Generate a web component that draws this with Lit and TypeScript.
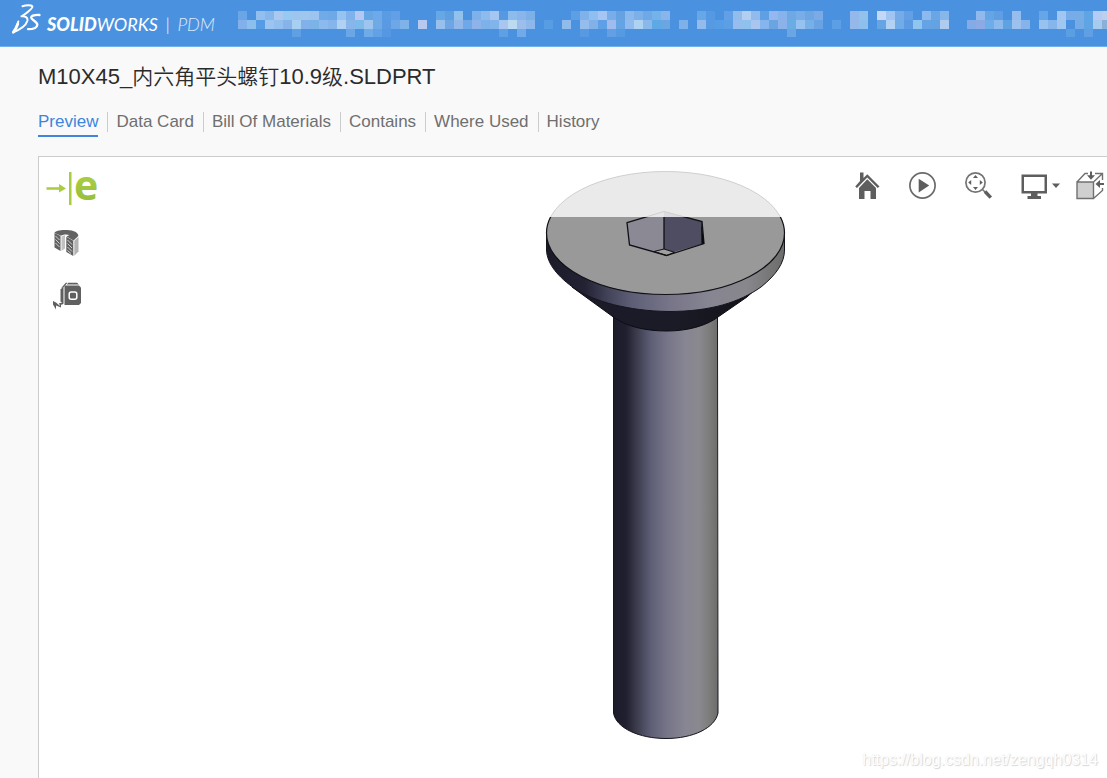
import { LitElement, html, svg, css } from "lit";
import { customElement, state } from "lit/decorators.js";

const CELL = 9;

/* Colour runs for the masked caption: "startColumn:colour,colour,..." */
const MASK_ROWS: string[][] = [
  [
    "0:6aa6e6",
    "2:92bfee,86b7ec,abc8ef,97caf0,9ec5ee,9fc6ed,9dc4ee,70aae8,6ea8e6,97c3f0,7fb1ea,b4c8f2,66a6e4,6eaae9,5a9be4,639fe6",
    "22:66a7e5,5e9fe2,92c2eb",
    "26:7eb0ea,8dbbee,a6c6f0,5599e2,8cbcec,8ab5ea,7eb0e8",
    "37:5c9fe4,80b2ea,8fbff0,a6c5f2,78ade9,66a2e2,8bb9ec,7eb0e8,6ea8e6,76b2ea,8ab5ec",
    "51:66a7e6,5599e2",
    "54:639fe6,92bcec,b2cff2,92bbec,5f9fe4,94b7ee,88b2ea,6fa9e4,78ade8,6ea6e4,7caae6",
    "68:94b8ea,92c2ec",
    "71:c4d7f6,a0c5f2,76abe8,629fe4",
    "76:8db9ee,68a6e6,86b7e8",
    "82:92b9ec,66a5e4,5f9ee2",
    "86:97bdec",
    "89:66a5e6",
    "91:a2c6f2,78ace8,76ade6,5fa5e4,b4cbf6,bccfee",
  ],
  [
    "0:82b0ea,8bbfec,559ce4,9bc4f0,93bfee,86b4ea,a6cff2,82b0ea,7cb3e7,8dbaee,86b5ec,b0d1f4,89b6ea,7ebaec,9ec5ee,6faae7,5a9ae2,6ea7e8,80b2ea",
    "20:b8c9f0",
    "22:97c1ec,6ea5e4,92b8ea,6ea8e6,8db3ea,7db1ea,80b4ea,a8c6f0,bcdaf2,9cbeec,8cb8ec",
    "34:579de4",
    "36:8fbcec",
    "38:94bcec,82b1e8,5f9fe6,a0bbee,64a4e4,90baf0,add2f2,89b8ea,5fa8e6,6aa6e2",
    "49:7eb0ea",
    "51:94bbee,579ae2,559de4,5c9fe4,97bdee,8fc1ec,a8c6f0,86b4ec,6aa5e2,8cb2ea,6aace4,97c1ee,76b0e8,6aa3e4",
    "66:5c9fe4",
    "68:94b8ea,8dc0ec",
    "71:66a5e4,b2d2f4,70ace8,5c9be2,92c4f0,64a4e6,64a2e2,b0cbf0",
    "81:82abe8,8cabe4,6cadea,8cbaec,5fa2e4,9cc1ee,86b4ea",
    "89:97c2f0,86b5ec,a0c6f2",
    "93:76abe6,5fa5e4,a6cbee,8ab0d8",
  ],
  [
    "6:5f9fe4",
    "12:6ba7e6",
    "14:6fabe8,62a1e5,5597e0",
    "29:5f9fe4",
    "31:70aae8",
    "38:559ae2",
    "41:629fe4,569ae2",
    "61:6aa6e4",
    "92:5c9ee2",
    "94:609fe4",
  ],
];

@customElement("pdm-header")
export class PdmHeader extends LitElement {
  static styles = css`
    :host {
      display: flex;
      align-items: flex-start;
      box-sizing: border-box;
      height: 47px;
      overflow: hidden;
      background: #4a92e0;
      border-bottom: 1px solid #6fb0ee;
      color: #fff;
    }
    .brand {
      flex: none;
      display: flex;
      align-items: flex-start;
      width: 226px;
      padding-left: 12px;
      color: inherit;
      text-decoration: none;
    }
    .mark {
      flex: none;
      display: block;
      margin-top: 4px;
    }
    .word {
      margin: 13px 0 0 6px;
      font: italic 400 18px/22px Lato, "Open Sans", sans-serif;
      white-space: nowrap;
    }
    .strong {
      font-weight: 900;
    }
    .bar {
      margin: 0 3px;
      font-weight: 300;
    }
    .thin {
      font-weight: 300;
      opacity: 0.8;
    }
    .mask {
      flex: none;
      display: block;
      margin-top: 11px;
    }
  `;

  render() {
    return html`
      <a class="brand" href="#" aria-label="SOLIDWORKS PDM">
        <svg class="mark" width="29" height="30" viewBox="12 4 29 30" fill="none" stroke="#fff" stroke-linecap="round" stroke-linejoin="round">
          <path d="M22.500 6.200 C26 5 31 4.800 32.300 6.200 C33.500 8 28 12 22.500 15.800" stroke-width="2" />
          <path d="M21.500 16.300 C25 16 28.300 17.200 27.300 21 C26 25.500 19 30 12.800 32.500 C15 29.500 17 26.500 18.300 21.500" stroke-width="2" />
          <path d="M13.500 32 C15.500 29.500 16.800 27 17.800 24" stroke-width="2.600" />
          <path d="M39.500 15 C35.500 14.500 31 15.500 31.200 17.700 C31.500 20 37.500 21.500 37.300 24.800 C37 27.800 33 29.200 28 29.200" stroke-width="2.300" />
        </svg>
        <span class="word"><span class="strong">SOLID</span>WORKS<span class="bar"> | </span><span class="thin">PDM</span></span>
      </a>
      <svg class="mask" width="873" height="26" viewBox="0 0 873 26" shape-rendering="crispEdges" aria-hidden="true">
        ${MASK_ROWS.map((row, y) =>
          row.map((run) => {
            const [start, list] = run.split(":");
            return list.split(",").map(
              (c, i) => svg`<rect x=${(Number(start) + i) * CELL} y=${y * CELL} width=${CELL} height=${y === 2 ? 8 : CELL} fill=${"#" + c}></rect>`
            );
          })
        )}
      </svg>
    `;
  }
}

@customElement("screw-model")
export class ScrewModel extends LitElement {
  static styles = css`
    :host {
      display: block;
    }
    .model {
      display: block;
    }
  `;

  render() {
    return html`
      <svg class="model" width="242" height="570" viewBox="545 171 242 570" role="img" aria-label="M10X45">
        <defs>
          <linearGradient id="shaft">
            <stop offset="0" stop-color="#1c1b2a" />
            <stop offset="0.120" stop-color="#201f2f" />
            <stop offset="0.200" stop-color="#363646" />
            <stop offset="0.360" stop-color="#5e5f77" />
            <stop offset="0.520" stop-color="#777588" />
            <stop offset="0.680" stop-color="#868592" />
            <stop offset="0.820" stop-color="#8a898f" />
            <stop offset="0.920" stop-color="#7c7c7b" />
            <stop offset="1" stop-color="#6c6c6a" />
          </linearGradient>
          <linearGradient id="rim">
            <stop offset="0" stop-color="#1b1a29" />
            <stop offset="0.160" stop-color="#232233" />
            <stop offset="0.260" stop-color="#43435a" />
            <stop offset="0.360" stop-color="#5e5f77" />
            <stop offset="0.520" stop-color="#777588" />
            <stop offset="0.680" stop-color="#868592" />
            <stop offset="0.840" stop-color="#88878c" />
            <stop offset="1" stop-color="#6c6c6a" />
          </linearGradient>
          <linearGradient id="cone">
            <stop offset="0" stop-color="#1b1a29" />
            <stop offset="0.550" stop-color="#1b1b27" />
            <stop offset="1" stop-color="#111116" />
          </linearGradient>
          <clipPath id="upper"><rect x="545" y="165" width="242" height="52" /></clipPath>
          <clipPath id="lower"><rect x="545" y="217" width="242" height="100" /></clipPath>
        </defs>
        <path d="M613.500 312 V713 C616 728 639 738.500 666 738.500 C693 738.500 715 728 718 713 L717 312 Z" fill="url(#shaft)" />
        <path d="M613.500 316 V713 C616 728 639 738.500 666 738.500 C693 738.500 715 728 718 713 L717.500 316" fill="none" stroke="#15151d" stroke-width="1" />
        <path d="M572 287 L614 317.500 C628 327 646 331 667 331 C687 331 706 326 718 317 L747 297 L760 285 Z" fill="url(#cone)" stroke="#0c0c12" stroke-width="1" />
        <path d="M546.500 234 V250 C547 264 558 277 576 289.500 C594 301 627 311 669 311.500 C711 311.500 740 302 761 287 C776 275 784.500 263 784.500 250 V234 Z" fill="url(#rim)" stroke="#15151d" stroke-width="1" />
        <g clip-path="url(#lower)">
          <ellipse cx="665.500" cy="233" rx="119" ry="61.500" fill="#999" stroke="#101015" stroke-width="1.200" />
        </g>
        <g clip-path="url(#upper)">
          <ellipse cx="665.500" cy="233" rx="119" ry="61.500" fill="#eaeaea" stroke="#cfcfcf" stroke-width="1" />
        </g>
        <g clip-path="url(#lower)">
          <path d="M627 222.700 L664 211.500 V249 L654 251.500 L629.500 245 Z" fill="#8a8994" />
          <path d="M664 211.500 L702 221.500 L704 243.500 L674 252 L664 249 Z" fill="#4e4d61" />
          <path d="M654 251.500 L664 249 L674.500 252.300 L666.500 255.500 Z" fill="#a0a09c" stroke="#101015" stroke-width="1" />
          <path d="M627 222.700 L664 211.500 L702 221.500 L704 243.500 L666.500 255.500 L629.500 245 Z M664 211.500 V249" fill="none" stroke="#101015" stroke-width="1.300" />
          <path d="M701 221.300 L704 243.500 L701.500 244 Z" fill="#08080c" />
        </g>
        <g clip-path="url(#upper)">
          <path d="M627 222.700 L664 211.500 V222 Z" fill="#e8e8ea" />
          <path d="M664 211.500 L702 221.500 H664 Z" fill="#dcdce0" />
          <path d="M627 222.700 L664 211.500 L702 221.500" fill="none" stroke="#cfcfcf" stroke-width="1" />
        </g>
      </svg>
    `;
  }
}

@customElement("app-root")
export class AppRoot extends LitElement {
  static styles = css`
    :host {
      display: flex;
      flex-direction: column;
      position: relative;
      min-height: 100vh;
      overflow: hidden;
      background: #f9f9f9;
      color: #2b2b2b;
      font-family: "Liberation Sans", "Noto Sans CJK SC", Arial, sans-serif;
    }
    .page {
      flex: 1;
      display: flex;
      flex-direction: column;
      padding: 16px 0 0 38px;
    }
    .title {
      margin: 0;
      font-size: 22px;
      font-weight: 400;
      line-height: 28px;
      white-space: nowrap;
    }
    .han {
      font-size: 21px;
      font-weight: 350;
    }
    .tabs {
      display: flex;
      margin: 18px 0;
    }
    .item {
      display: flex;
      align-items: flex-start;
      height: 29px;
    }
    .item + .item::before {
      content: "";
      width: 1px;
      height: 20px;
      margin: 3px 8px 0 9px;
      background: #ccc;
    }
    .tab {
      padding: 2px 0 3px;
      border: 0;
      border-bottom: 2px solid transparent;
      background: none;
      color: #6f6f6f;
      font: inherit;
      font-size: 17px;
      line-height: 21px;
      white-space: nowrap;
      cursor: pointer;
    }
    .tab[aria-selected="true"] {
      border-color: #3d85dd;
      color: #3d85dd;
    }
    .viewer {
      flex: 1;
      display: flex;
      align-items: flex-start;
      border: solid #ccc;
      border-width: 1px 0 0 1px;
      background: #fff;
    }
    .side {
      display: flex;
      flex-direction: column;
      gap: 22px;
      padding: 13px 7px;
    }
    .stage {
      flex: 1;
      display: flex;
      justify-content: flex-end;
      padding: 14px 67px 0 0;
    }
    .toolbar {
      display: flex;
      align-items: center;
      gap: 26px;
      padding: 14px 1px 0 0;
    }
    .tool {
      display: block;
      padding: 0;
      border: 0;
      background: none;
      color: #5e5e5e;
      cursor: pointer;
    }
    .side .tool:not(:first-child) {
      padding-left: 7px;
      height: 31px;
      text-align: left;
    }
    .tool svg {
      display: block;
      overflow: visible;
    }
    .watermark {
      position: absolute;
      right: 9px;
      bottom: 9px;
      color: #fff;
      font-size: 16px;
      line-height: 18px;
      text-shadow: 1px 1px 1px #d6d6d6, 0 0 1px #e4e4e4;
    }
  `;

  @state() private current = "Preview";

  private tabs = ["Preview", "Data Card", "Bill Of Materials", "Contains", "Where Used", "History"];

  private renderSide() {
    return html`
      <div class="side">
        <button class="tool" aria-label="eDrawings">
          <svg width="52" height="35" viewBox="46 171 52 35">
            <defs>
              <linearGradient id="green" x1="0" y1="0" x2="0" y2="1">
                <stop offset="0" stop-color="#b9d84c" />
                <stop offset="1" stop-color="#8fb935" />
              </linearGradient>
            </defs>
            <path d="M46.500 188.300 H59 V185 L66 189.500 L59 193.500 V190.700 H46.500 Z" fill="#a9cc42" />
            <rect x="69" y="173" width="2.500" height="33" fill="#a9cc42" />
            <text x="74" y="201" font-family="Open Sans, Noto Sans, sans-serif" font-weight="700" font-size="41" fill="url(#green)">e</text>
          </svg>
        </button>
        <button class="tool" aria-label="Section view">
          <svg width="26" height="30" viewBox="53 227 26 30">
            <path d="M54.500 232 C55 229.500 61 228.700 67 229 C74 229.400 78.500 231.500 78.300 235 L73.500 239.500 L66.500 235.500 L69.500 234 C66 232.800 62.500 233.500 61 234.800 Z" fill="#626262" />
            <path d="M54.500 232 L60.500 235 V250 L54.500 246.500 Z" fill="#626262" />
            <path d="M61.500 235.500 L65 234 V247.500 L61.500 250 Z" fill="#c2c2c2" />
            <path d="M66.300 235.800 L73.300 239.700 V255 L66.300 251 Z" fill="#626262" />
            <path d="M74.300 239.700 L78.500 236 V250.500 L74.300 254.800 Z" fill="#b3b3b3" />
            <path d="M55.500 235 L59.500 239 M55.500 238.500 L59.500 242.500 M55.500 242 L59.500 246 M67.500 239 L72 243.500 M67.500 242.500 L72 247 M67.500 246 L72 250.500 M67.500 249.500 L71 252.500" stroke="#d0d0d0" stroke-width="1" />
          </svg>
        </button>
        <button class="tool" aria-label="Measure">
          <svg width="30" height="30" viewBox="53 281 30 30">
            <path d="M64.500 285.500 H79 L81 287.500 V303 L79 305 H64.500 Z" fill="#606060" />
            <path d="M63.500 286.500 V304 L60.500 301.500 V289.500 Z" fill="#606060" />
            <path d="M61 288.300 L65.800 282.800 H67.500 L63.800 287 Z M66.800 284.600 L68.300 282.800 H77 L79 284.600 Z" fill="#606060" />
            <rect x="69.200" y="292" width="7.600" height="7.200" rx="2" fill="none" stroke="#fff" stroke-width="1.500" />
            <path d="M63 302.500 L59 303.300 L60 306 L56 302.500 L53 301 V304.500 L56 309.500 V305.500 L61 307.500 V304.800 L63 304.300 Z" fill="#606060" />
          </svg>
        </button>
      </div>
    `;
  }

  private renderToolbar() {
    return html`
      <div class="toolbar">
        <button class="tool" aria-label="Home">
          <svg width="28" height="30" viewBox="854 171 28 30">
            <path d="M860 181 V172.500 H863.500 V178 L867.300 174.200 L879.500 186.400 L877.700 188 L867.300 177.600 L857 188 L855.200 186.400 Z" fill="#5e5e5e" />
            <path d="M867.300 179.200 L876 188 V199 H870.500 V191 H864.500 V199 H859 V188 Z" fill="#5e5e5e" />
          </svg>
        </button>
        <button class="tool" aria-label="Play">
          <svg width="30" height="30" viewBox="908 171 30 30">
            <circle cx="922.500" cy="185.500" r="12.600" fill="none" stroke="#6a6a6a" stroke-width="1.700" />
            <path d="M918.700 178.700 L929.200 185.500 L918.700 192.500 Z" fill="#5e5e5e" />
          </svg>
        </button>
        <button class="tool" aria-label="Zoom to fit">
          <svg width="30" height="30" viewBox="964 171 30 30">
            <circle cx="975.500" cy="182.500" r="9.600" fill="none" stroke="#747474" stroke-width="1.700" />
            <path d="M975.500 175 L978 178 H973 Z M975.500 190 L978 187 H973 Z M968.200 182.500 L971.200 180 V185 Z M982.800 182.500 L979.800 180 V185 Z" fill="#5e5e5e" />
            <path d="M982.500 189.500 L985 192" stroke="#747474" stroke-width="1.600" />
            <path d="M985 191.500 L990.800 197.600" stroke="#5e5e5e" stroke-width="3.400" />
          </svg>
        </button>
        <button class="tool" aria-label="Display">
          <svg width="30" height="30" viewBox="1020 171 30 30">
            <path d="M1021.500 174.500 H1047 V193.500 H1037.500 V196 H1041 V199 H1027.500 V196 H1031 V193.500 H1021.500 Z M1024 177 V191 H1044.500 V177 Z" fill="#5e5e5e" fill-rule="evenodd" />
            <path d="M1052 183.500 H1060 L1056 188 Z" fill="#5e5e5e" />
          </svg>
        </button>
        <button class="tool" aria-label="Views">
          <svg width="30" height="30" viewBox="1076 171 30 30">
            <path d="M1077 182 H1093.500 V198.500 H1077 Z" fill="#cfcfcf" />
            <path d="M1077 182 H1093.500 V198.500 H1077 Z M1077 182 L1085 173.500 H1088 M1095 173.500 H1102.500 V180 M1093.500 182 L1102.500 173.500 M1102.500 188 V190.500 L1093.500 198.500" fill="none" stroke="#707070" stroke-width="1.400" />
            <path d="M1091 171.500 V176 M1104 184 H1099" stroke="#5e5e5e" stroke-width="2" fill="none" />
            <path d="M1087 175.300 H1095 L1091 179.800 Z M1100 180 V188 L1095.500 184 Z" fill="#5e5e5e" />
          </svg>
        </button>
      </div>
    `;
  }

  render() {
    return html`
      <pdm-header></pdm-header>
      <main class="page">
        <h1 class="title">M10X45_<span class="han">内六角平头螺钉</span>10.9<span class="han">级</span>.SLDPRT</h1>
        <div class="tabs" role="tablist">
          ${this.tabs.map(
            (name) => html`<div class="item" role="presentation">
              <button class="tab" role="tab" aria-selected=${this.current === name ? "true" : "false"} @click=${() => (this.current = name)}>${name}</button>
            </div>`
          )}
        </div>
        <section class="viewer" aria-label="Preview">
          ${this.renderSide()}
          <div class="stage"><screw-model></screw-model></div>
          ${this.renderToolbar()}
        </section>
      </main>
      <span class="watermark">https://blog.csdn.net/zengqh0314</span>
    `;
  }
}
